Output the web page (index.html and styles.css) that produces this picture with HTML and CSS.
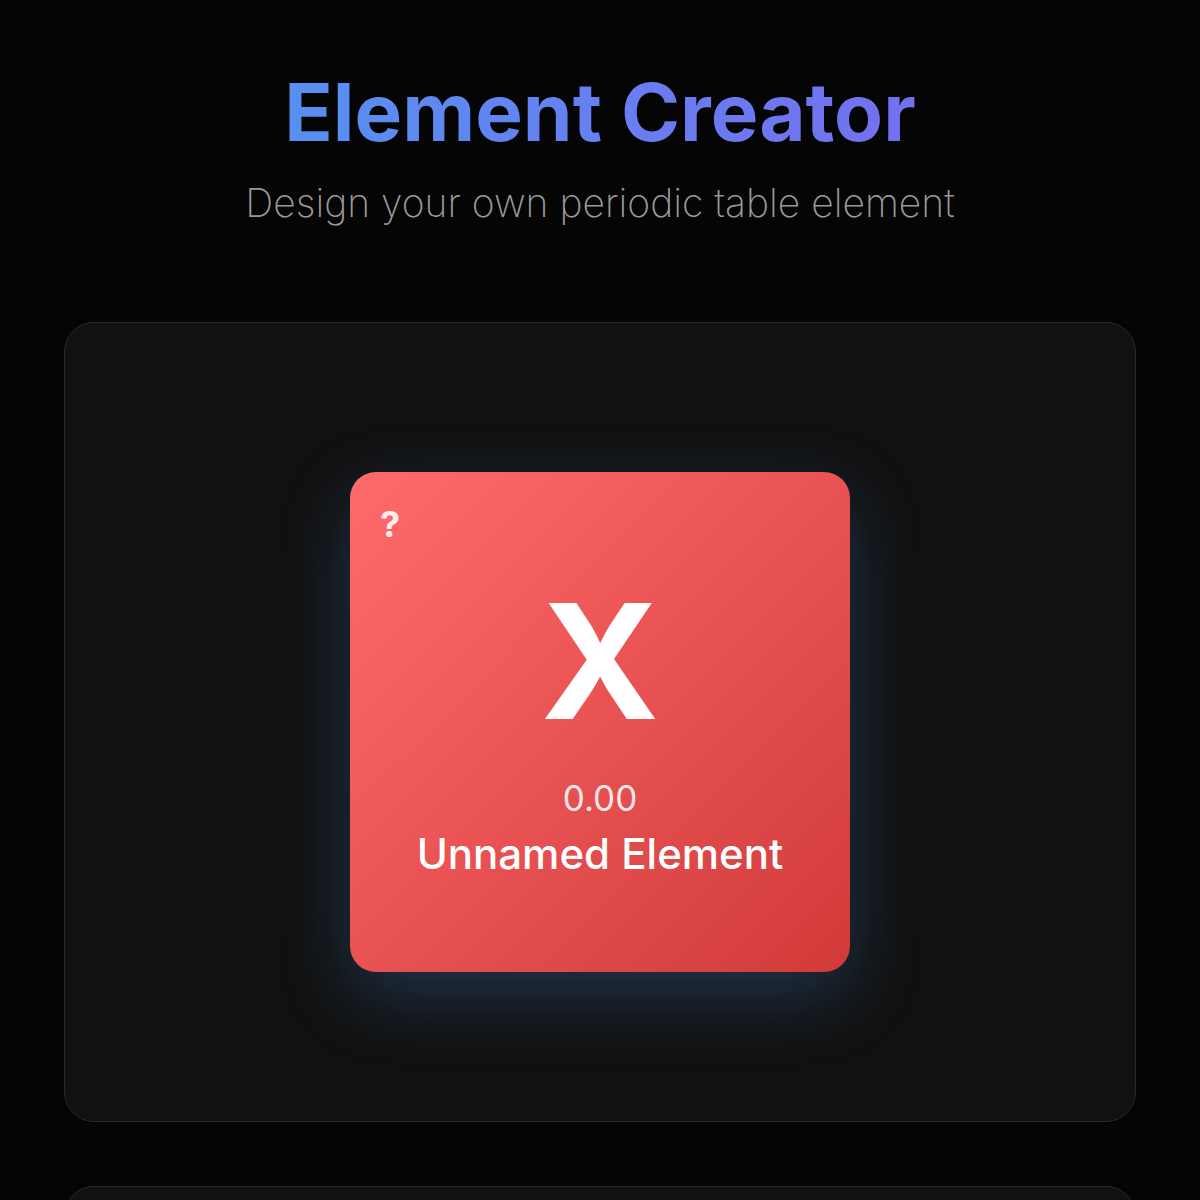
FILE: index.html
```html
<!DOCTYPE html>
<html lang="en">
<head>
  <meta charset="UTF-8" />
  <meta name="viewport" content="width=device-width, initial-scale=1.0"/>
  <title>Element Creator</title>
  <link rel="stylesheet" href="styles.css">
</head>
<body>
  <div class="page">
    <header class="page-header">
      <h1><span>Element Creator</span></h1>
      <p>Design your own periodic table element</p>
    </header>

    <section class="panel preview-panel">
      <div class="element-tile">
        <span class="element-number">?</span>
        <div class="element-symbol">X</div>
        <div class="element-mass">0.00</div>
        <div class="element-name">Unnamed Element</div>
      </div>
    </section>

    <section class="panel form-panel"></section>
  </div>
</body>
</html>
```

FILE: styles.css
```css
/* page background & text */
html, body {
  margin: 0;
  padding: 0;
  background: #050505;
  color: #fff;
  font-family: Inter, "Noto Sans", sans-serif;
}

.page {
  max-width: 1072px;
  margin: 0 auto;
  padding: 64px 64px 0;
  display: flex;
  flex-direction: column;
  gap: 64px;
}

/* title */
.page-header {
  text-align: center;
  margin-bottom: 32px;
}
.page-header h1 {
  margin: 0;
  font-size: 80px;
  font-weight: 700;
  line-height: 1.2;
}
.page-header h1 span {
  background: linear-gradient(90deg, #5790f1, #7470ef);
  -webkit-background-clip: text;
  background-clip: text;
  color: transparent;
}
.page-header p {
  margin: 20px 0 0;
  font-size: 39px;
  line-height: 46px;
  font-weight: 250;
  color: #9a9a9a;
}

/* cards */
.panel {
  background: #111;
  border: 1px solid #2a2a2a;
  border-radius: 30px;
}
.preview-panel {
  display: flex;
  justify-content: center;
  padding: 149px 0;
}
.form-panel {
  height: 400px;
}

/* element tile */
.element-tile {
  position: relative;
  width: 500px;
  height: 500px;
  border-radius: 26px;
  background: linear-gradient(135deg, #ff6b6b, #d23a3a);
  box-shadow: 0 24px 70px rgba(70, 130, 200, 0.3);
  display: flex;
  flex-direction: column;
  align-items: center;
  padding-top: 109px;
  box-sizing: border-box;
}
.element-number {
  position: absolute;
  top: 30px;
  left: 30px;
  font-size: 36px;
  font-weight: 700;
  color: rgba(255, 255, 255, 0.9);
}
.element-symbol {
  font-size: 160px;
  font-weight: 700;
  line-height: 1;
}
.element-mass {
  margin-top: 36px;
  font-size: 35px;
  color: rgba(255, 255, 255, 0.88);
}
.element-name {
  margin-top: 9px;
  font-size: 42px;
  font-weight: 500;
}
```
